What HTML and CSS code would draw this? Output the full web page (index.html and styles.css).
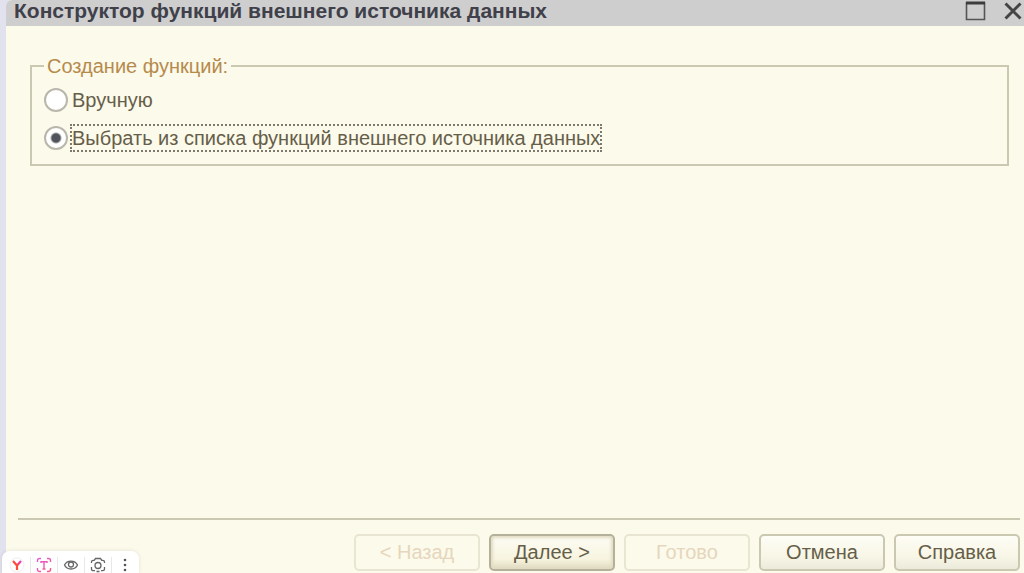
FILE: index.html
```html
<!DOCTYPE html>
<html lang="ru">
<head>
    <meta charset="UTF-8">
    <meta name="viewport" content="width=device-width, initial-scale=1.0">
    <title>Конструктор функций внешнего источника данных</title>
    <link rel="stylesheet" href="styles.css">
</head>
<body>
    <form class="window">
        <header class="titlebar">
            <h1>Конструктор функций внешнего источника данных</h1>
            <div class="window-controls">
                <button type="button" aria-label="Развернуть">
                    <svg width="22" height="20" viewBox="0 0 22 20"><path d="M1.500 1v17.500h18V1" fill="none" stroke="#555" stroke-width="1.600"/><path d="M1 2h19" stroke="#3c3c3c" stroke-width="3"/></svg>
                </button>
                <button type="button" aria-label="Закрыть">
                    <svg width="20" height="20" viewBox="0 0 20 20"><path d="M2.500 2.500l15 15M17.500 2.500l-15 15" fill="none" stroke="#444" stroke-width="3"/></svg>
                </button>
            </div>
        </header>

        <main class="content">
            <fieldset class="group">
                <legend>Создание функций:</legend>
                <div class="option">
                    <input type="radio" name="mode" id="manual">
                    <label for="manual">Вручную</label>
                </div>
                <div class="option">
                    <input type="radio" name="mode" id="list" checked>
                    <label for="list" class="focused">Выбрать из списка функций внешнего источника данных</label>
                </div>
            </fieldset>
        </main>

        <footer class="actions">
            <button type="button" class="btn" disabled>&lt; Назад</button>
            <button type="button" class="btn btn-default">Далее &gt;</button>
            <button type="button" class="btn" disabled>Готово</button>
            <button type="button" class="btn">Отмена</button>
            <button type="button" class="btn">Справка</button>
        </footer>
    </form>

    <div class="toolbar">
        <button type="button" aria-label="Яндекс">
            <svg width="16" height="16" viewBox="0 0 16 16">
                <defs><linearGradient id="warm" x1="0" y1="1" x2="1" y2="0"><stop offset="0.5" stop-color="#ff4b32"/><stop offset="1" stop-color="#e83ad0"/></linearGradient></defs>
                <circle cx="8" cy="8" r="7" fill="#fff" stroke="#eee"/>
                <path d="M4 4l4 4.500L12 4M8 8v5" fill="none" stroke="url(#warm)" stroke-width="2.200"/>
            </svg>
        </button>
        <button type="button" aria-label="Распознать текст">
            <svg width="16" height="16" viewBox="0 0 16 16" fill="none" stroke="url(#pink)" stroke-width="1.400">
                <defs><linearGradient id="pink" gradientUnits="userSpaceOnUse" x1="0" y1="0" x2="16" y2="16"><stop stop-color="#dc5ae8"/><stop offset="1" stop-color="#ff5b78"/></linearGradient></defs>
                <path d="M1.500 5V3.500a2 2 0 0 1 2-2H5M11 1.500h1.500a2 2 0 0 1 2 2V5M14.500 11v1.500a2 2 0 0 1-2 2H11M5 14.500H3.500a2 2 0 0 1-2-2V11M5 6V4.800h6V6M8 5v7M6.500 12h3"/>
            </svg>
        </button>
        <button type="button" aria-label="Просмотр">
            <svg width="16" height="16" viewBox="0 0 16 16" fill="none" stroke="#666" stroke-width="1.300">
                <path d="M1.500 8C4 2.700 12 2.700 14.500 8 12 13.300 4 13.300 1.500 8z"/>
                <circle cx="8" cy="7.500" r="2.500"/>
            </svg>
        </button>
        <button type="button" aria-label="Поиск по картинке">
            <svg width="16" height="16" viewBox="0 0 16 16" fill="none" stroke="#666" stroke-width="1.300">
                <path d="M1.500 6V5c0-1 .7-1.700 1.700-1.700h1L5.500 1.500h5l1.300 1.800h1c1 0 1.700.7 1.700 1.700v1M14.500 10v2c0 1-.7 1.700-1.700 1.700H11M5 13.700H3.200c-1 0-1.700-.7-1.700-1.700v-2M6.500 14.500h3"/>
                <circle cx="8" cy="8.500" r="3"/>
            </svg>
        </button>
        <button type="button" aria-label="Ещё">
            <svg width="16" height="16" viewBox="0 0 16 16" fill="#555"><circle cx="8" cy="3" r="1.300"/><circle cx="8" cy="8" r="1.300"/><circle cx="8" cy="13" r="1.300"/></svg>
        </button>
    </div>
</body>
</html>
```

FILE: styles.css
```css
* {
    margin: 0;
    padding: 0;
    box-sizing: border-box;
}

body {
    background: #e1e2ed;
    font-family: "Liberation Sans", Arial, sans-serif;
    font-size: 20px;
    color: #665e49;
    padding-left: 6px;
}

button, input {
    font: inherit;
    color: inherit;
}

.window {
    display: flex;
    flex-direction: column;
    min-height: 100vh;
    background: #fcfaeb;
    border-top-left-radius: 6px;
    overflow: hidden;
}

.titlebar {
    display: flex;
    justify-content: space-between;
    align-items: center;
    height: 26px;
    padding: 0 1px 4px 8px;
    background: #cecece;
}

.titlebar h1 {
    font-size: 21px;
    line-height: 22px;
    color: #40404a;
}

.window-controls {
    display: flex;
    gap: 16px;
}

.window-controls button {
    display: flex;
    border: none;
    background: none;
}

.content {
    flex: 1;
    padding: 28px 15px 0 24px;
}

.group {
    border: 2px solid #cbc8b2;
    padding: 8px 12px 12px;
}

.group legend {
    line-height: 24px;
    padding: 0 3px;
    color: #b68a4b;
}

.option {
    display: flex;
    align-items: center;
}

.option + .option {
    margin-top: 10px;
}

.option input {
    appearance: none;
    width: 24px;
    height: 24px;
    border: 2px solid #b9b7ac;
    border-radius: 50%;
    background: #fff;
}

.option input:checked {
    background: radial-gradient(circle, #50535b 4px, #fff 6px);
}

.option label {
    line-height: 24px;
    margin-left: 2px;
    border: 2px solid transparent;
}

.option .focused {
    border: 2px dotted #7d796d;
}

.actions {
    display: flex;
    justify-content: flex-end;
    gap: 9px;
    margin: 0 4px 0 12px;
    padding: 14px 0 2px;
    border-top: 2px solid #cbc8b2;
}

.btn {
    width: 126px;
    height: 37px;
    border: 2px solid #cbc8b2;
    border-radius: 5px;
    background: linear-gradient(#fefdf6, #f8f6e6 60%, #eceada);
}

.btn:disabled {
    border-color: #e9e5d3;
    background: #fcfaeb;
    color: #e6d6bd;
}

.btn-default {
    border-color: #b5b09a;
    background: linear-gradient(#fdfcf4, #f7f4df 70%, #e0dbc2);
    box-shadow: inset 0 0 3px 2px #e2dcc3;
}

/* floating browser panel */
.toolbar {
    position: fixed;
    left: 2px;
    bottom: 0;
    display: flex;
    padding: 6px 1px 0;
    background: #fff;
    border-radius: 8px 8px 0 0;
    box-shadow: 0 0 4px rgba(0, 0, 0, 0.1);
}

.toolbar button {
    display: flex;
    justify-content: center;
    width: 27px;
    height: 16px;
    border: none;
    background: none;
}

.toolbar button + button {
    border-left: 1px solid #e8e8e8;
}
```
